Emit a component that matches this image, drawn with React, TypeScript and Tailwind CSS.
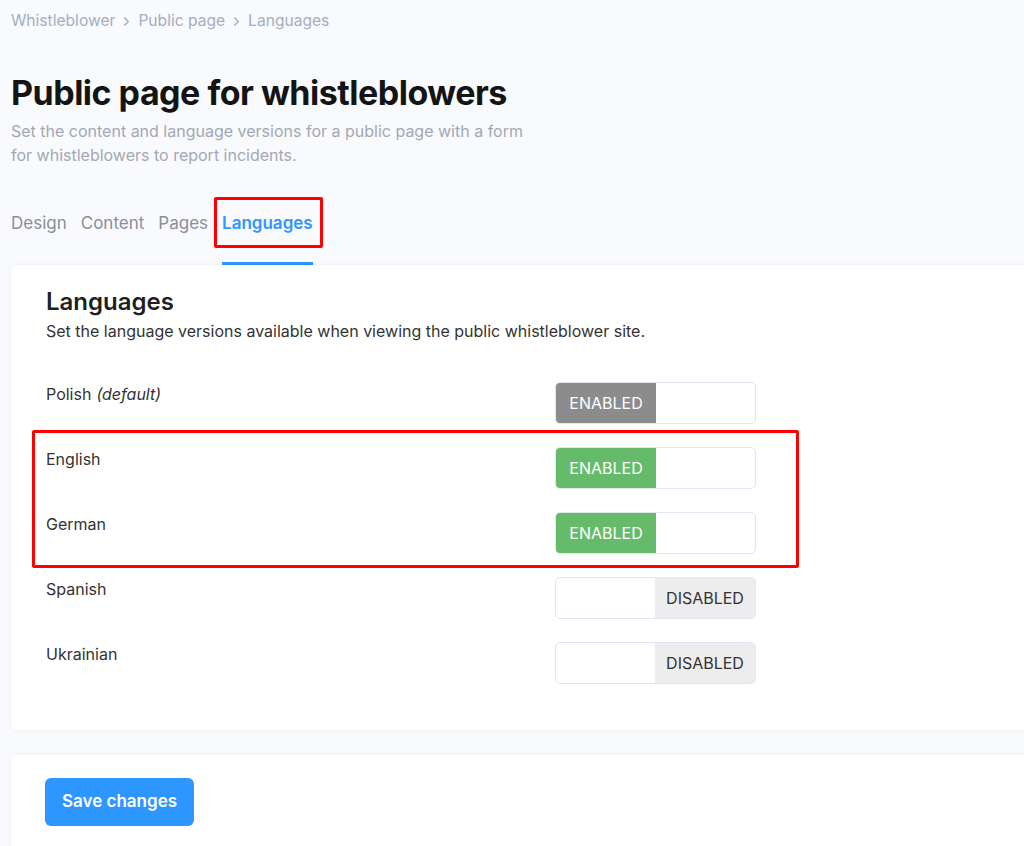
import React, { useState } from 'react';
import { ChevronRight } from 'lucide-react';

type Lang = { id: string; name: string; isDefault?: boolean; enabled: boolean };

const LANGS: Lang[] = [
    { id: 'pl', name: 'Polish', isDefault: true, enabled: true },
    { id: 'en', name: 'English', enabled: true },
    { id: 'de', name: 'German', enabled: true },
    { id: 'es', name: 'Spanish', enabled: false },
    { id: 'uk', name: 'Ukrainian', enabled: false },
];

const Toggle: React.FC<{ on: boolean; locked?: boolean; onClick: () => void }> = ({ on, locked, onClick }) => (
    <button
        onClick={onClick}
        className="flex h-[42px] w-[201px] overflow-hidden rounded-[5px] border border-[#e1e6f3] bg-white text-[16px] uppercase"
    >
        {on ? (
            <>
                <span className={`flex w-[100px] items-center justify-center text-white ${locked ? 'bg-[#8c8c8c]' : 'bg-[#66bb6a]'}`}>Enabled</span>
                <span className="flex-1" />
            </>
        ) : (
            <>
                <span className="flex-1" />
                <span className="flex w-[100px] items-center justify-center bg-[#ededed] text-[#333]">Disabled</span>
            </>
        )}
    </button>
);

export default function App() {
    const [langs, setLangs] = useState<Lang[]>(LANGS);

    const toggle = (id: string) =>
        setLangs(ls => ls.map(l => (l.id === id && !l.isDefault ? { ...l, enabled: !l.enabled } : l)));

    return (
        <div className="relative min-h-[846px] overflow-hidden bg-[#f9fafd] pl-[11px] font-['Inter',sans-serif]">
            {/* breadcrumb */}
            <div className="flex h-[42px] items-center gap-[4px] text-[15.6px] text-[#a3aec2]">
                <span>Whistleblower</span>
                <ChevronRight size={15} strokeWidth={1.8} className="text-[#9aa5b8]" />
                <span>Public page</span>
                <ChevronRight size={15} strokeWidth={1.8} className="text-[#9aa5b8]" />
                <span>Languages</span>
            </div>

            <h1 className="mt-[30px] text-[34px] font-bold leading-[42px] tracking-[-0.5px] text-[#141414]">Public page for whistleblowers</h1>
            <p className="mt-[5px] w-[520px] text-[16px] leading-[24px] text-[#a3a8b3]">
                Set the content and language versions for a public page with a form for whistleblowers to report incidents.
            </p>

            {/* tabs */}
            <div className="mt-[36px] flex gap-[14px] text-[17px]">
                {['Design', 'Content', 'Pages'].map(t => (
                    <span key={t} className="pb-[28px] pt-[8px] text-[#8a8f99]">{t}</span>
                ))}
                <span className="relative border-b-[3px] border-[#2f96ff] pb-[25px] pt-[8px] font-semibold text-[#2f96ff]">
                    Languages
                    <span className="absolute -left-[8px] -top-[6px] h-[51px] w-[109px] rounded-[2px] border-[3px] border-[#ff0000]" />
                </span>
            </div>

            {/* languages card */}
            <div className="relative w-[1040px] rounded-[6px] bg-white px-[35px] pb-[46px] pt-[22px] shadow-[0_0_4px_rgba(20,30,60,0.06)]">
                <h2 className="text-[24px] font-semibold leading-[30px] text-[#1f1f1f]">Languages</h2>
                <p className="mt-[2px] text-[16px] leading-[24px] text-[#333]">
                    Set the language versions available when viewing the public whistleblower site.
                </p>

                <div className="mt-[39px] flex flex-col gap-[23px]">
                    {langs.map(l => (
                        <div key={l.id} className="flex items-start">
                            <div className="w-[509px] text-[16px] leading-[24px] text-[#333]">
                                {l.name}
                                {l.isDefault && <i className="ml-[5px]">(default)</i>}
                            </div>
                            <Toggle on={l.enabled} locked={l.isDefault} onClick={() => toggle(l.id)} />
                        </div>
                    ))}
                </div>

                {/* annotation */}
                <div className="absolute left-[21px] top-[165px] h-[138px] w-[767px] rounded-[2px] border-[3px] border-[#ff0000]" />
            </div>

            {/* footer card */}
            <div className="mt-[25px] w-[1040px] rounded-[6px] bg-white px-[34px] pb-[30px] pt-[23px] shadow-[0_0_4px_rgba(20,30,60,0.06)]">
                <button className="h-[48px] rounded-[6px] bg-[#2d96ff] px-[17px] text-[17px] font-semibold text-white">
                    Save changes
                </button>
            </div>
        </div>
    );
}
